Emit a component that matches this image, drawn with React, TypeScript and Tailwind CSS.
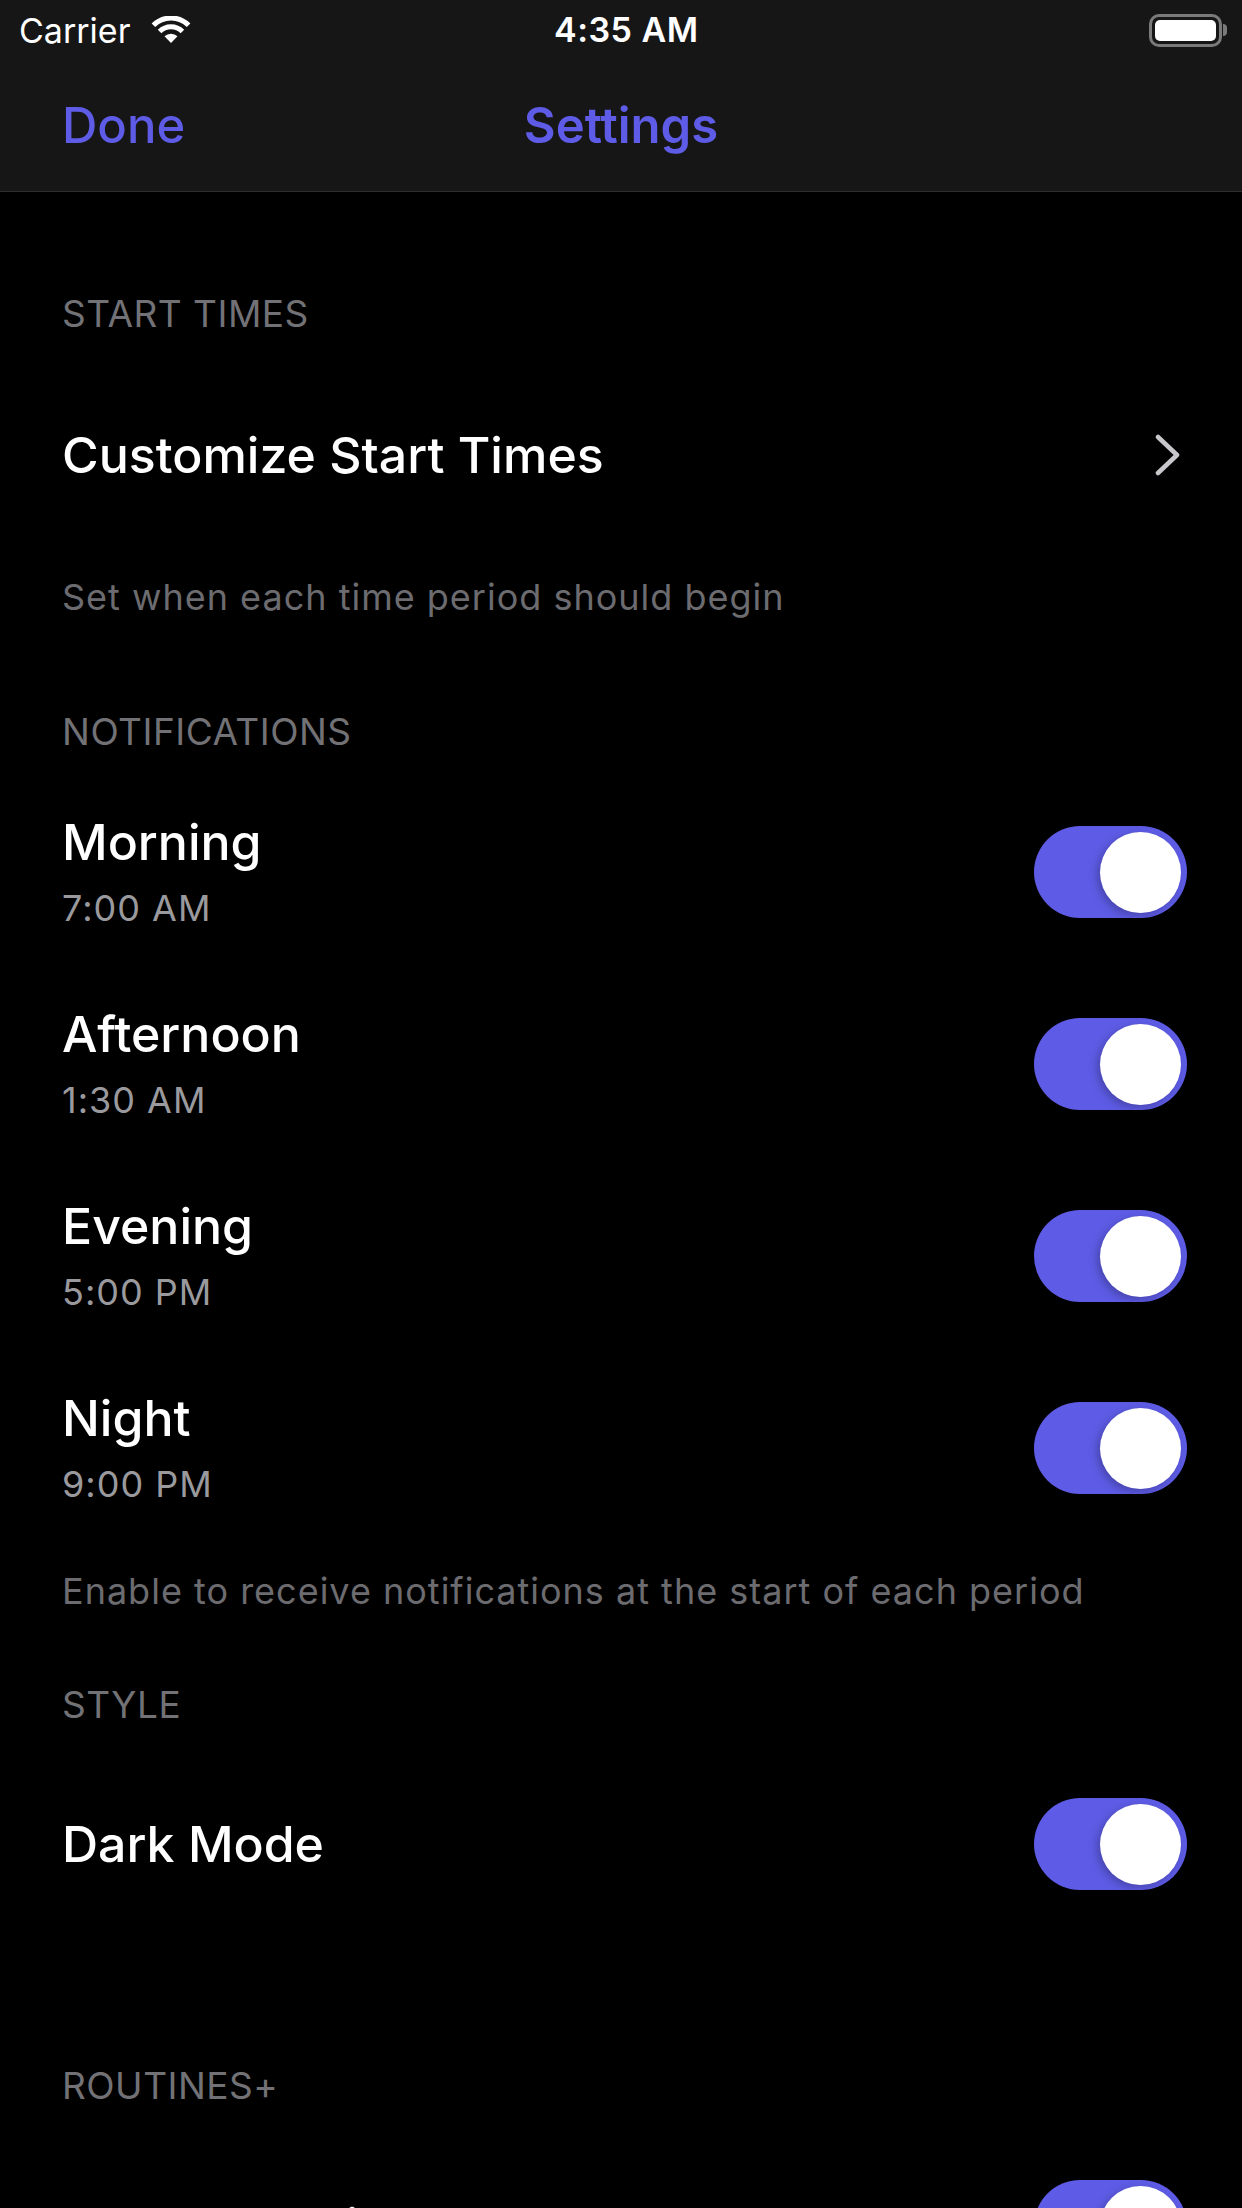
type Period = { name: string; time: string }

const periods: Period[] = [
  { name: 'Morning', time: '7:00 AM' },
  { name: 'Afternoon', time: '1:30 AM' },
  { name: 'Evening', time: '5:00 PM' },
  { name: 'Night', time: '9:00 PM' },
]

function WifiIcon() {
  return (
    <svg width="42" height="28" viewBox="0 0 42 28" className="ml-[20px]">
      <path d="M21 27 L14.5 20.2 A9.5 9.5 0 0 1 27.5 20.2 Z" fill="white" />
      <path
        d="M9.6 15.6 A16 16 0 0 1 32.4 15.6"
        stroke="white"
        strokeWidth="5"
        fill="none"
      />
      <path
        d="M3.4 9.2 A25 25 0 0 1 38.6 9.2"
        stroke="white"
        strokeWidth="5"
        fill="none"
      />
    </svg>
  )
}

function Battery() {
  return (
    <div className="flex items-center">
      <div className="w-[73px] h-[33px] rounded-[10px] border-[3px] border-[#7a7a7a] p-[3px]">
        <div className="w-full h-full rounded-[5px] bg-white" />
      </div>
      <div className="w-[4px] h-[12px] rounded-r-full bg-[#7a7a7a] ml-[1px]" />
    </div>
  )
}

function Chevron() {
  return (
    <svg width="28" height="42" viewBox="0 0 28 42" className="mr-[4px]">
      <polyline
        points="4,3 23,21 4,39"
        fill="none"
        stroke="#c7c7cc"
        strokeWidth="4.5"
        strokeLinecap="round"
        strokeLinejoin="round"
      />
    </svg>
  )
}

function Toggle() {
  return (
    <div className="w-[153px] h-[92px] rounded-full bg-[#5e5ce6] flex items-center justify-end pr-[6px] shrink-0">
      <div className="w-[81px] h-[81px] rounded-full bg-white shadow-[-3px_3px_8px_rgba(0,0,0,0.25)]" />
    </div>
  )
}

function SectionHeader({ title, className }: { title: string; className?: string }) {
  return (
    <div className={`px-[62px] h-[40px] flex items-center text-[37px] tracking-[0.5px] text-[#727276] ${className ?? ''}`}>
      {title}
    </div>
  )
}

function Footer({ text, className }: { text: string; className?: string }) {
  return (
    <div className={`px-[62px] h-[40px] flex items-center text-[36px] tracking-[1px] text-[#6c6c70] ${className ?? ''}`}>
      {text}
    </div>
  )
}

export default function App() {
  return (
    <div className="w-[1242px] h-[2208px] overflow-hidden bg-black font-['Inter',sans-serif]">
      {/* Status + nav bar */}
      <div className="h-[192px] bg-[#161616] border-b border-[#2e2e2e]">
        <div className="h-[60px] relative flex items-center px-[19px] text-white text-[34px]">
          <div className="flex items-center">
            <span>Carrier</span>
            <WifiIcon />
          </div>
          <span className="absolute left-[554px] top-[10px] font-semibold leading-[40px] tracking-[0.5px]">4:35 AM</span>
          <div className="ml-auto -mr-[4px]">
            <Battery />
          </div>
        </div>
        <div className="h-[131px] relative flex items-center px-[62px] text-[#5e5ce6] text-[49px]">
          <span className="font-medium">Done</span>
          <span className="absolute inset-x-0 text-center font-semibold">Settings</span>
        </div>
      </div>

      <SectionHeader title="START TIMES" className="mt-[102px]" />

      <div className="mt-[61px] h-[120px] pl-[62px] pr-[56px] flex items-center justify-between">
        <span className="text-white text-[50px] font-medium">Customize Start Times</span>
        <Chevron />
      </div>

      <Footer text="Set when each time period should begin" className="mt-[62px]" />

      <SectionHeader title="NOTIFICATIONS" className="mt-[95px]" />

      <div className="mt-[24px]">
        {periods.map(p => (
          <div key={p.name} className="h-[192px] pl-[62px] pr-[55px] flex justify-between items-center">
            <div className="self-start pt-[36px]">
              <div className="h-[60px] flex items-center text-white text-[50px] font-medium">{p.name}</div>
              <div className="mt-[16px] h-[40px] flex items-center text-[#9a9a9e] text-[36px] tracking-[1px]">{p.time}</div>
            </div>
            <Toggle />
          </div>
        ))}
      </div>

      <Footer text="Enable to receive notifications at the start of each period" className="mt-[27px]" />

      <SectionHeader title="STYLE" className="mt-[74px]" />

      <div className="mt-[53px] h-[132px] pl-[62px] pr-[55px] flex items-center justify-between">
        <span className="text-white text-[50px] font-medium">Dark Mode</span>
        <Toggle />
      </div>

      <SectionHeader title="ROUTINES+" className="mt-[156px]" />

      <div className="mt-[54px] h-[132px] pl-[62px] pr-[55px] flex items-center justify-between">
        <span className="text-white text-[50px] font-medium">Enable Routines+</span>
        <Toggle />
      </div>
    </div>
  )
}
